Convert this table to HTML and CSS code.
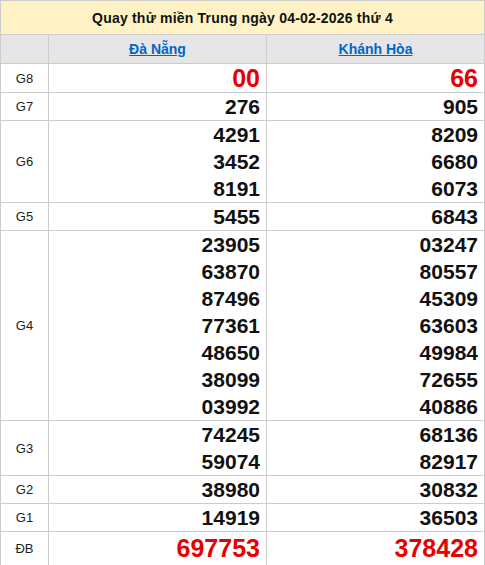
FILE: index.html
```html
<!DOCTYPE html>
<html lang="vi">
<head>
<meta charset="utf-8">
<title>Quay thử miền Trung</title>
<link rel="stylesheet" href="styles.css">
</head>
<body>
<table class="kq">
  <colgroup>
    <col class="c-label">
    <col class="c-prov">
    <col class="c-prov">
  </colgroup>
  <thead>
    <tr class="title-row"><th colspan="3">Quay thử miền Trung ngày 04-02-2026 thứ 4</th></tr>
    <tr class="prov-row">
      <th></th>
      <th><a href="#">Đà Nẵng</a></th>
      <th><a href="#">Khánh Hòa</a></th>
    </tr>
  </thead>
  <tbody>
    <tr class="big"><td class="lbl">G8</td><td class="num red"><div>00</div></td><td class="num red"><div>66</div></td></tr>
    <tr><td class="lbl">G7</td><td class="num"><div>276</div></td><td class="num"><div>905</div></td></tr>
    <tr><td class="lbl">G6</td><td class="num"><div>4291</div><div>3452</div><div>8191</div></td><td class="num"><div>8209</div><div>6680</div><div>6073</div></td></tr>
    <tr><td class="lbl">G5</td><td class="num"><div>5455</div></td><td class="num"><div>6843</div></td></tr>
    <tr><td class="lbl">G4</td><td class="num"><div>23905</div><div>63870</div><div>87496</div><div>77361</div><div>48650</div><div>38099</div><div>03992</div></td><td class="num"><div>03247</div><div>80557</div><div>45309</div><div>63603</div><div>49984</div><div>72655</div><div>40886</div></td></tr>
    <tr><td class="lbl">G3</td><td class="num"><div>74245</div><div>59074</div></td><td class="num"><div>68136</div><div>82917</div></td></tr>
    <tr><td class="lbl">G2</td><td class="num"><div>38980</div></td><td class="num"><div>30832</div></td></tr>
    <tr><td class="lbl">G1</td><td class="num"><div>14919</div></td><td class="num"><div>36503</div></td></tr>
    <tr class="db"><td class="lbl">ĐB</td><td class="num red"><div>697753</div></td><td class="num red"><div>378428</div></td></tr>
  </tbody>
</table>
</body>
</html>
```
FILE: styles.css
```css
html, body {
  margin: 0;
  padding: 0;
  background: #fff;
}
body {
  font-family: "Liberation Sans", Arial, sans-serif;
  color: #111;
}
.kq {
  width: 485px;
  border-collapse: collapse;
  table-layout: fixed;
}
.c-label { width: 48px; }
.c-prov { width: 218px; }
.kq th, .kq td {
  border: 1px solid #cccccc;
  padding: 0;
}
.title-row th {
  background: #fff3c6;
  height: 33px;
  font-size: 14px;
  letter-spacing: 0.2px;
  font-weight: bold;
  color: #111;
  text-align: center;
}
.prov-row th {
  background: #e6e6e6;
  height: 28px;
  font-size: 14px;
  font-weight: bold;
  text-align: center;
}
.prov-row a {
  color: #0066cc;
  text-decoration: underline;
}
.lbl {
  text-align: center;
  font-size: 13px;
  color: #222;
}
.num {
  text-align: right;
  padding-right: 6px !important;
  font-size: 21px;
  font-weight: bold;
  color: #111;
}
.num div {
  line-height: 27px;
  height: 27px;
}
.big .num { font-size: 25px; }
.big .num div { height: 28px; line-height: 28px; }
.db .num { font-size: 25px; }
.db .num div { height: 33px; line-height: 33px; }
.red { color: #e60000 !important; }
```
